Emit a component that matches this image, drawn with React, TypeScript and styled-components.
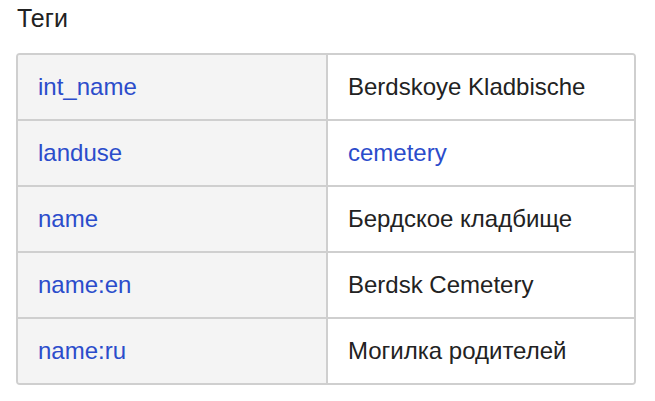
import React from "react";
import styled, { createGlobalStyle } from "styled-components";

const Global = createGlobalStyle`
  html, body { margin: 0; padding: 0; background: #fff; }
  body { font-family: "Liberation Sans", Arial, sans-serif; }
`;

const Page = styled.div`
  padding: 4px 19px 0 16px;
  width: 655px;
  box-sizing: border-box;
`;

const Title = styled.h3`
  margin: 0 0 21px 1px;
  font-size: 25px;
  font-weight: normal;
  line-height: 28px;
  color: #222;
`;

const Table = styled.div`
  display: grid;
  grid-template-columns: 310px 1fr;
  border: 2px solid #cfcfcf;
  border-radius: 4px;
  overflow: hidden;
`;

const Cell = styled.div<{ $key?: boolean; $last?: boolean; $link?: boolean }>`
  box-sizing: border-box;
  height: ${(p) => (p.$last ? 64 : 66)}px;
  display: flex;
  align-items: center;
  padding: 0 20px;
  font-size: 24px;
  background: ${(p) => (p.$key ? "#f4f4f4" : "#fff")};
  color: ${(p) => (p.$link ? "#2b4ccb" : "#222")};
  border-bottom: ${(p) => (p.$last ? "none" : "2px solid #cfcfcf")};
  border-right: ${(p) => (p.$key ? "2px solid #cfcfcf" : "none")};
`;

const rows: { k: string; v: string; vLink?: boolean }[] = [
  { k: "int_name", v: "Berdskoye Kladbische" },
  { k: "landuse", v: "cemetery", vLink: true },
  { k: "name", v: "Бердское кладбище" },
  { k: "name:en", v: "Berdsk Cemetery" },
  { k: "name:ru", v: "Могилка родителей" },
];

export default function App() {
  return (
    <>
      <Global />
      <Page>
        <Title>Теги</Title>
        <Table>
          {rows.map((r, i) => {
            const last = i === rows.length - 1;
            return (
              <React.Fragment key={r.k}>
                <Cell $key $link $last={last}>{r.k}</Cell>
                <Cell $link={r.vLink} $last={last}>{r.v}</Cell>
              </React.Fragment>
            );
          })}
        </Table>
      </Page>
    </>
  );
}
